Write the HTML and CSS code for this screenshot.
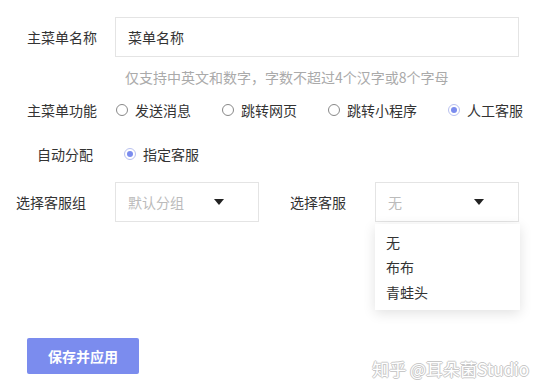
FILE: index.html
```html
<!DOCTYPE html>
<html lang="zh-CN">
  <head>
    <meta charset="utf-8">
    <title>菜单设置</title>
    <link rel="stylesheet" href="styles.css">
  </head>
  <body>
    <div class="page">
      <div class="row row-name">
        <span class="label">主菜单名称</span>
        <div class="input">菜单名称</div>
      </div>
      <p class="hint">仅支持中英文和数字，字数不超过4个汉字或8个字母</p>

      <div class="row row-func">
        <span class="label">主菜单功能</span>
        <span class="radio"><i class="circle"></i>发送消息</span>
        <span class="radio"><i class="circle"></i>跳转网页</span>
        <span class="radio"><i class="circle"></i>跳转小程序</span>
        <span class="radio checked"><i class="circle"></i>人工客服</span>
      </div>

      <div class="row row-assign">
        <span class="label">自动分配</span>
        <span class="radio checked"><i class="circle"></i>指定客服</span>
      </div>

      <div class="row row-select">
        <span class="label">选择客服组</span>
        <div class="select">
          <span class="placeholder">默认分组</span>
          <i class="arrow"></i>
        </div>
        <span class="label label-staff">选择客服</span>
        <div class="select open">
          <span class="placeholder">无</span>
          <i class="arrow"></i>
          <ul class="menu">
            <li>无</li>
            <li>布布</li>
            <li>青蛙头</li>
          </ul>
        </div>
      </div>

      <button class="button">保存并应用</button>

      <div class="watermark">知乎 @耳朵菌Studio</div>
    </div>
  </body>
</html>
```

FILE: styles.css
```css
html, body {
  margin: 0;
  padding: 0;
}
body {
  background: #fff;
  color: #333;
  font-family: "Noto Sans CJK SC", "Noto Sans", sans-serif;
  font-size: 14px;
  line-height: 20px;
}
.page {
  position: relative;
  width: 544px;
  height: 391px;
  padding-top: 17px;
  box-sizing: border-box;
  overflow: hidden;
}
.row {
  display: flex;
  align-items: center;
  white-space: nowrap;
}
.label {
  box-sizing: border-box;
  flex-shrink: 0;
}
.row-name .label {
  width: 115px;
  padding-left: 27px;
}
.input {
  width: 404px;
  height: 40px;
  box-sizing: border-box;
  border: 1px solid #e4e4e4;
  padding: 0 12px;
  display: flex;
  align-items: center;
}
.hint {
  margin: 10px 0 0 0;
  padding-left: 125px;
  color: #aaa;
  white-space: nowrap;
}
.row-func {
  margin-top: 13px;
}
.row-func .label {
  width: 116px;
  padding-left: 27px;
}
.radio {
  display: inline-flex;
  align-items: center;
  flex-shrink: 0;
  margin-right: 31px;
}
.radio:last-child {
  margin-right: 0;
}
.circle {
  width: 12px;
  height: 12px;
  flex-shrink: 0;
  box-sizing: border-box;
  border: 1px solid #888;
  border-radius: 50%;
  margin-right: 7px;
  display: flex;
  align-items: center;
  justify-content: center;
}
.checked .circle {
  border-color: #b9c1ef;
}
.checked .circle:after {
  content: "";
  width: 6px;
  height: 6px;
  border-radius: 50%;
  background: #7b8cee;
}
.row-assign {
  margin-top: 24px;
}
.row-assign .label {
  width: 124px;
  padding-left: 37px;
}
.row-select {
  margin-top: 18px;
}
.row-select .label {
  width: 115px;
  padding-left: 16px;
}
.row-select .label-staff {
  width: 85px;
  padding-left: 0;
  margin-left: 31px;
}
.select {
  position: relative;
  width: 144px;
  height: 40px;
  flex-shrink: 0;
  box-sizing: border-box;
  border: 1px solid #e4e4e4;
  padding: 0 34px 0 12px;
  display: flex;
  align-items: center;
  justify-content: space-between;
}
.placeholder {
  color: #bbb;
}
.arrow {
  width: 0;
  height: 0;
  border-left: 5px solid transparent;
  border-right: 5px solid transparent;
  border-top: 6px solid #222;
}
.menu {
  position: absolute;
  top: 41px;
  left: -1px;
  width: 145px;
  margin: 0;
  padding: 6px 0 5px 0;
  list-style: none;
  background: #fff;
  box-shadow: 0 3px 12px rgba(0, 0, 0, 0.12);
}
.menu li {
  padding-left: 11px;
  line-height: 25px;
  color: #333;
}
.button {
  display: block;
  margin: 116px 0 0 27px;
  width: 112px;
  height: 36px;
  border: none;
  border-radius: 2px;
  background: #7b8cee;
  color: #fff;
  font-family: "Noto Sans CJK SC", "Noto Sans", sans-serif;
  font-size: 14px;
  font-weight: bold;
}
.watermark {
  position: absolute;
  right: 15px;
  top: 357px;
  font-size: 17px;
  line-height: 24px;
  color: #fff;
  text-shadow: 1px 0 0 #c8c8c8, -1px 0 0 #c8c8c8, 0 1px 0 #c8c8c8, 0 -1px 0 #c8c8c8;
}
```
